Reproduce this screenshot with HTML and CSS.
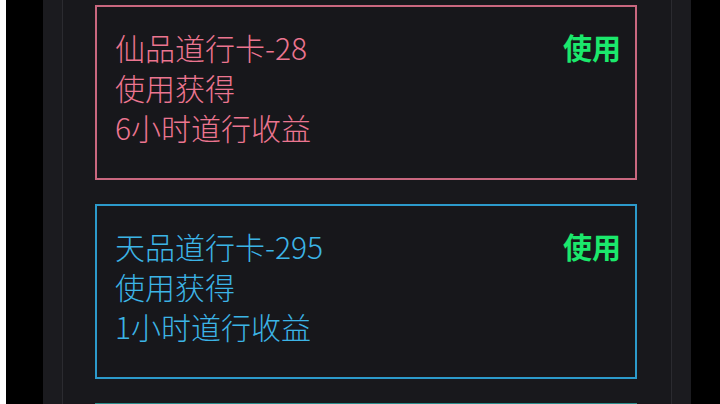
FILE: index.html
```html
<!DOCTYPE html>
<html lang="zh-CN">
<head>
<meta charset="utf-8">
<link rel="stylesheet" href="styles.css">
</head>
<body>
<div class="phone">
  <div class="list">
    <div class="card card-xian">
      <div class="info">
        <div class="line">仙品道行卡-28</div>
        <div class="line">使用获得</div>
        <div class="line">6小时道行收益</div>
      </div>
      <div class="use">使用</div>
    </div>
    <div class="card card-tian">
      <div class="info">
        <div class="line">天品道行卡-295</div>
        <div class="line">使用获得</div>
        <div class="line">1小时道行收益</div>
      </div>
      <div class="use">使用</div>
    </div>
    <div class="card card-di"></div>
  </div>
</div>
</body>
</html>
```
FILE: styles.css
```css
html, body {
  margin: 0;
  padding: 0;
  height: 100%;
  overflow: hidden;
}
body {
  background: #000;
  border-left: 6px solid #fff;
  font-family: "Noto Sans CJK SC", "Noto Sans", sans-serif;
}
.phone {
  margin-left: 37px;
  width: 648px;
  height: 100%;
  background: #1b1b1f;
  padding: 0 19px;
  box-sizing: border-box;
}
.list {
  height: 100%;
  border-left: 1px solid #2b2b30;
  border-right: 1px solid #2b2b30;
  background: #18181c;
  padding: 5px 34px 0 32px;
  display: flex;
  flex-direction: column;
  gap: 24px;
}
.card {
  flex: none;
  height: 175px;
  box-sizing: border-box;
  border: 2px solid;
  padding: 20px 14px 0 18px;
  display: flex;
  justify-content: space-between;
  align-items: flex-start;
  background: #17171b;
}
.line {
  font-size: 30px;
  font-weight: 300;
  line-height: 40px;
}
.use {
  font-size: 29px;
  line-height: 40px;
  font-weight: 700;
  color: #1be86c;
}
.card-xian { border-color: #c9677f; color: #ec7590; }
.card-tian { border-color: #2c9acb; color: #3cb4e6; }
.card-di { border-color: #2a8c8a; }
```
